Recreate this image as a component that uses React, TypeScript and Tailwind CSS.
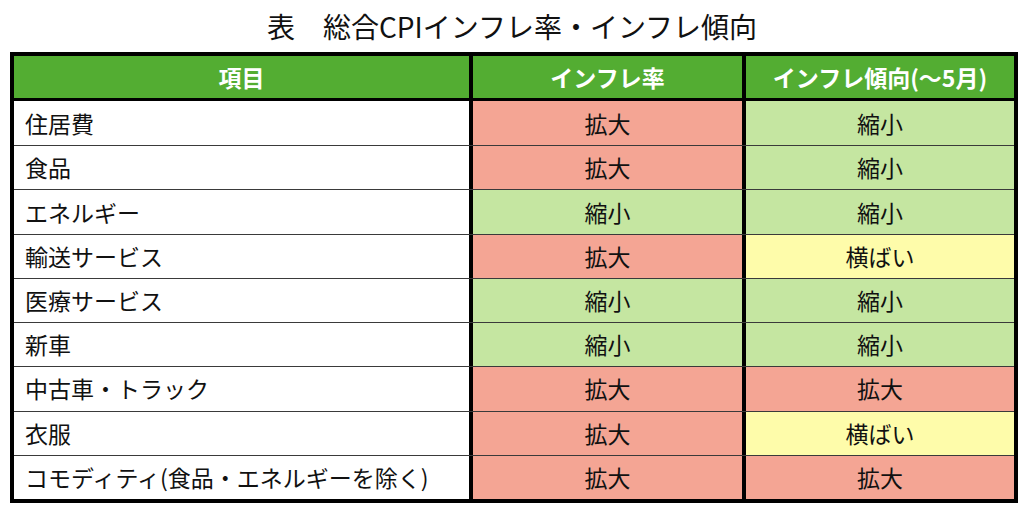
const rows: { name: string; rate: string; trend: string }[] = [
  { name: '住居費', rate: '拡大', trend: '縮小' },
  { name: '食品', rate: '拡大', trend: '縮小' },
  { name: 'エネルギー', rate: '縮小', trend: '縮小' },
  { name: '輸送サービス', rate: '拡大', trend: '横ばい' },
  { name: '医療サービス', rate: '縮小', trend: '縮小' },
  { name: '新車', rate: '縮小', trend: '縮小' },
  { name: '中古車・トラック', rate: '拡大', trend: '拡大' },
  { name: '衣服', rate: '拡大', trend: '横ばい' },
  { name: 'コモディティ(食品・エネルギーを除く)', rate: '拡大', trend: '拡大' },
];

function cellColor(v: string) {
  if (v === '拡大') return 'bg-[#f4a594]';
  if (v === '縮小') return 'bg-[#c5e6a1]';
  return 'bg-[#fefcaa]';
}

export default function App() {
  return (
    <div
      className="w-[1024px] h-[510px] bg-white text-[#111]"
      style={{ fontFamily: '"Noto Sans CJK JP", "Noto Sans", sans-serif' }}
    >
      <h1 className="h-[52px] flex items-center justify-center text-[28px] leading-none font-normal">
        表　総合CPIインフレ率・インフレ傾向
      </h1>

      <div className="ml-[10px] w-[1008px] border-4 border-black">
        <div className="grid grid-cols-[455px_273px_272px] h-[45px] bg-[#53ad32] border-b-[3px] border-black text-white font-bold text-[23px] leading-none">
          <div className="flex items-center justify-center">項目</div>
          <div className="flex items-center justify-center border-l-4 border-black">インフレ率</div>
          <div className="flex items-center justify-center border-l-4 border-black">インフレ傾向(〜5月)</div>
        </div>

        <div className="grid grid-rows-[repeat(9,1fr)] h-[398px] text-[23px] leading-none">
          {rows.map((r, i) => (
            <div
              key={r.name}
              className={`grid grid-cols-[455px_273px_272px] ${i > 0 ? 'border-t border-[#3a3a3a]' : ''}`}
            >
              <div className="flex items-center pl-[11px] bg-white">{r.name}</div>
              <div className={`flex items-center justify-center border-l-4 border-black ${cellColor(r.rate)}`}>
                {r.rate}
              </div>
              <div className={`flex items-center justify-center border-l-4 border-black ${cellColor(r.trend)}`}>
                {r.trend}
              </div>
            </div>
          ))}
        </div>
      </div>
    </div>
  );
}
